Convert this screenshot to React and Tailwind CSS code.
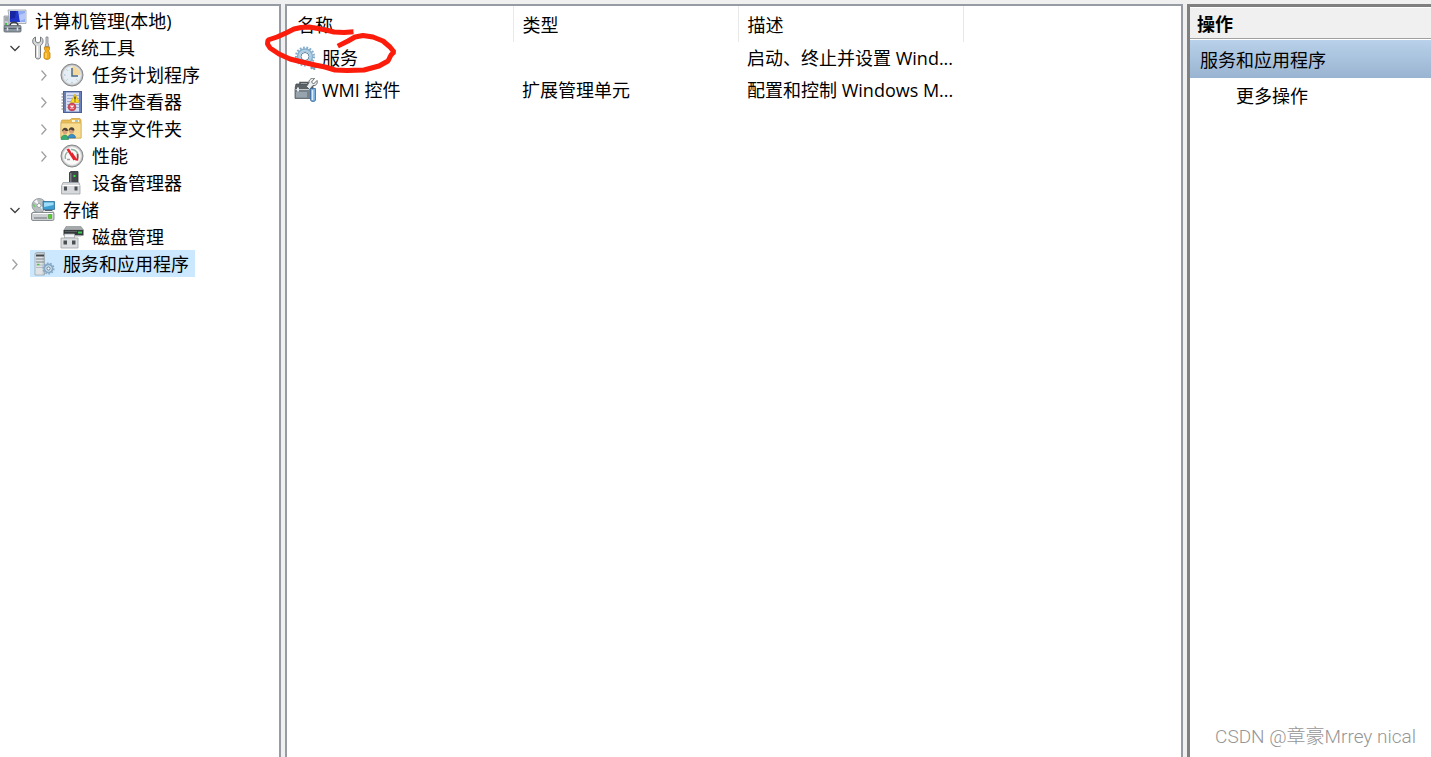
import React, { useState } from 'react';

function Svg({ children }) {
  return (
    <svg viewBox="0 0 24 24" className="w-6 h-6 shrink-0" fill="none" aria-hidden="true">
      {children}
    </svg>
  );
}

function ComputerIcon() {
  return (
    <Svg>
      <path d="M1 7h5v10H1z" fill="#c3c9ce" stroke="#8d959c" strokeWidth="0.8" />
      <path d="M2 9h3M2 11h3" stroke="#7f878e" />
      <path d="M2 14h2v2H2z" fill="#45c14b" />
      <path d="M5 1h18v13.500H7z" fill="#e3e6ea" stroke="#9aa1a8" strokeWidth="0.8" />
      <path d="M7 2h15v11H7z" fill="#2036c8" />
      <path d="M15 2h7v11h-5z" fill="#8fa9f2" />
      <path d="M16 6l6-2v6l-5 2z" fill="#b4c6fa" />
      <path d="M7 2h6l-1 7-5 1z" fill="#1626a0" />
      <path d="M7 17c0-5 8-5 8 0" stroke="#3c4248" strokeWidth="1.500" />
      <rect x="1" y="16.500" width="17" height="6.500" rx="1" fill="#8a959e" stroke="#5c666f" strokeWidth="0.8" />
      <path d="M1 19.500h17" stroke="#56606a" />
      <path d="M4.500 18.500v3M14.500 18.500v3" stroke="#dfe4e8" strokeWidth="1.500" />
    </Svg>
  );
}

function ToolsIcon() {
  return (
    <Svg>
      <path
        d="M4.500 1C2 2 1.200 4.500 2 7c.4 1.200 1.500 2 2.500 2.500V21c0 2.600 5 2.600 5 0V9.500c1.700-.8 2.800-2.800 2.500-5C11.800 3 11 1.700 9.500 1v4.500L7 7 4.500 5.500z"
        fill="#d6d8da"
        stroke="#74797d"
      />
      <path d="M6.500 10v11" stroke="#fff" strokeWidth="1.200" />
      <path d="M15 1h2v6l1 3.500h-4l1-3.500z" fill="#c8ccd0" stroke="#7d8286" strokeWidth="0.8" />
      <path d="M13.500 11h5v2.500l-1 1.500 1.500 2v4.500c0 2.500-6 2.500-6 0V17l1.500-2-1-1.500z" fill="#f4ad18" stroke="#c07f0c" strokeWidth="0.8" />
      <path d="M15 17v5" stroke="#ffe08a" strokeWidth="1.200" />
    </Svg>
  );
}

function ClockIcon() {
  return (
    <Svg>
      <circle cx="12" cy="12" r="11" fill="#b5b6b7" stroke="#858789" />
      <circle cx="12" cy="12" r="9.300" fill="#e5eef5" stroke="#d9dbdc" />
      <path d="M12 12V3.500A8.500 8.500 0 0 1 20.500 12z" fill="#f5d99c" />
      <path d="M12 5v8h6" stroke="#4b6a86" strokeWidth="1.500" />
      <path d="M12 19v1.500M4 12h1.500M6.500 6.500l1 1M6.500 17.500l1-1M17.500 17.500l-1-1" stroke="#a3b3c0" />
    </Svg>
  );
}

function EventIcon() {
  return (
    <Svg>
      <rect x="3.500" y="1.500" width="18" height="21" fill="#6981bd" stroke="#4c5f92" />
      <path d="M6 2.500h13v19H6z" fill="#d5def2" />
      <path d="M7 5.500h12M7 8.500h12M7 11.500h12M7 14.500h12M7 17.500h12" stroke="#9aabd6" />
      <path d="M1.500 4h4M1.500 7h4M1.500 10h4M1.500 13h4M1.500 16h4M1.500 19h4" stroke="#6c7484" strokeWidth="1.200" />
      <path d="M15 4l4.500 8.500h-9z" fill="#ffdc27" stroke="#d8b01c" strokeWidth="0.8" />
      <path d="M15 6.500v3M15 10.500v1" stroke="#332b00" strokeWidth="1.200" />
      <circle cx="12" cy="17" r="3.800" fill="#d94c5c" stroke="#b53545" strokeWidth="0.8" />
      <path d="M10.500 15.500l3 3M13.500 15.500l-3 3" stroke="#fff" strokeWidth="1.200" />
    </Svg>
  );
}

function SharedFolderIcon() {
  return (
    <Svg>
      <path d="M1 5l1-2h8l1.500-1.500H20L21 3v18H1z" fill="#e8bd56" stroke="#cfa546" strokeWidth="0.8" />
      <path d="M12 3h7v2h-7z" fill="#fff6d2" />
      <path d="M15 4h3" stroke="#4b9ad4" />
      <path d="M1 6h20v15H1z" fill="#f7dc92" stroke="#d7b25a" strokeWidth="0.8" />
      <path d="M1 22.500c0-6 7.500-6 7.500 0z" fill="#37ae6f" stroke="#208350" strokeWidth="0.6" />
      <path d="M8 21c0-5 7.500-5 7.500 0z" fill="#3b8fc9" stroke="#22679a" strokeWidth="0.6" />
      <circle cx="5" cy="14.500" r="2.600" fill="#d8a27c" />
      <path d="M2 14.500c0-5 6-5 6-.5-2 .3-3-.6-3.800-1z" fill="#4b4034" />
      <circle cx="11.500" cy="14" r="2.600" fill="#d8a27c" />
      <path d="M8.500 14c0-5 6-5 6-.5-2 .3-3-.6-3.800-1z" fill="#4b4034" />
    </Svg>
  );
}

function PerformanceIcon() {
  return (
    <Svg>
      <circle cx="12" cy="12" r="11" fill="#b9babb" stroke="#858688" />
      <circle cx="12" cy="12" r="9.300" fill="#fafafa" stroke="#dedede" />
      <path d="M5.500 15a7 7 0 0 1 2-7M11 5.500c4-.5 8 3 7 9" stroke="#8fb3a0" strokeWidth="1.500" />
      <path d="M6.500 5.500L9 4.500l6.500 11-2 1z" fill="#e3222a" />
      <path d="M12 8l6 8.500h-2.500L12 11z" fill="#e3222a" />
      <path d="M17.500 10v6.500" stroke="#e3222a" strokeWidth="1.500" />
      <path d="M7 15.500h3" stroke="#9da1a4" strokeWidth="1.500" />
    </Svg>
  );
}

function DeviceIcon() {
  return (
    <Svg>
      <path d="M9.500 1.500L11 .500h7v12H9.500z" fill="#42484c" stroke="#292d30" strokeWidth="0.8" />
      <path d="M10 2h1.500v10H10z" fill="#787f84" />
      <path d="M13.500 4h2v2h-2z" fill="#35df45" />
      <path d="M3 11.500h16l1 3.500v8H1.500v-8z" fill="#d6d8db" stroke="#9da1a5" strokeWidth="0.8" />
      <path d="M2.500 14.500h17" stroke="#fff" />
      <path d="M4 15.500h3v4H4zM14.500 15.500h3v4h-3z" fill="#4c5156" />
    </Svg>
  );
}

function StorageIcon() {
  return (
    <Svg>
      <path d="M2 15l2-3h17l2 3z" fill="#eceeef" stroke="#969b9f" strokeWidth="0.7" />
      <rect x="0.500" y="14.500" width="22.500" height="8" rx="1.500" fill="#cdd0d2" stroke="#74797d" strokeWidth="0.8" />
      <path d="M2 15.500h20" stroke="#fff" />
      <path d="M3 20h13" stroke="#8b9195" strokeWidth="1.500" />
      <path d="M17.500 16.500h3v4h-3z" fill="#55d32c" stroke="#398e20" strokeWidth="0.5" />
      <circle cx="8" cy="7.500" r="7" fill="#b9bec1" stroke="#8c9296" strokeWidth="0.8" />
      <path d="M8 7.500L3 3.500l3-2zM8 7.500l6 2-2 3z" fill="#f4f6f7" />
      <circle cx="8" cy="7.500" r="2" fill="#fff" stroke="#8c9296" strokeWidth="0.8" />
      <path d="M2 6l2 3" stroke="#6fca6a" strokeWidth="1.500" />
      <path d="M12 3.500h11.500v8H12z" fill="#3f9fd3" stroke="#2c6f99" strokeWidth="0.8" />
      <path d="M13 4.500h9.500v2.500L13 9z" fill="#9fdcf7" />
      <path d="M14 12.500h7" stroke="#5c6468" />
    </Svg>
  );
}

function DiskIcon() {
  return (
    <Svg>
      <path d="M4 5l2-3.500h15L23.500 5z" fill="#a5a9ac" stroke="#85898c" strokeWidth="0.6" />
      <path d="M3.500 5h20v5.500h-20z" fill="#34393c" />
      <path d="M5 6.500h12" stroke="#596064" />
      <path d="M18 6.500h4v2h-4z" fill="#38cf4e" />
      <path d="M6 11h15" stroke="#b5b9bb" />
      <path d="M4.500 9h10v4h-10z" fill="#f3f4f5" stroke="#a2a6a9" strokeWidth="0.8" />
      <path d="M1 13h17v10H1z" fill="#dcdee0" stroke="#a0a4a7" strokeWidth="0.8" />
      <path d="M3.500 15.500h3.500v4H3.500zM12 15.500h3.500v4H12z" fill="#4a4f52" />
    </Svg>
  );
}

function Gear({ cx, cy, r, color, width }) {
  return (
    <g stroke={color}>
      <circle cx={cx} cy={cy} r={r} strokeWidth={width} />
      <circle cx={cx} cy={cy} r={r + width * 0.7} strokeWidth={width * 0.7} strokeDasharray="1.800 1.500" />
    </g>
  );
}

function ServerGearIcon() {
  return (
    <Svg>
      <path d="M4 1.500L6 .500h7.500V23H4z" fill="#c5cbcf" stroke="#98a1a8" strokeWidth="0.8" />
      <path d="M4.500 2h7v20.500h-7z" fill="#dfe3e5" />
      <path d="M5 3.500h8" stroke="#42494e" strokeWidth="2" />
      <path d="M5 7h8M5 10h8" stroke="#7a8388" strokeWidth="1.200" />
      <path d="M5 13h8M5 15.500h7" stroke="#b4bbbf" />
      <path d="M6 12.500h2.500" stroke="#4ec451" strokeWidth="1.500" />
      <Gear cx="17.500" cy="16.500" r={4} width={2} color="#86a9c6" />
      <circle cx="17.500" cy="16.500" r="3" fill="#c9dcea" />
      <circle cx="17.500" cy="16.500" r="1.600" fill="#eff7fc" stroke="#54758f" strokeWidth="0.8" />
    </Svg>
  );
}

function GearsIcon() {
  return (
    <Svg>
      <Gear cx="11" cy="10.500" r={6.5} width={3.4} color="#86aecb" />
      <circle cx="11" cy="10.500" r="6" stroke="#b4d3e8" strokeWidth="1.500" />
      <circle cx="11" cy="10.500" r="4" fill="#fff" stroke="#55809f" strokeWidth="1" />
      <Gear cx="19.500" cy="20" r={2} width={1.8} color="#7899b2" />
      <circle cx="19.500" cy="20" r="1.200" fill="#fff" />
    </Svg>
  );
}

function ToolboxIcon() {
  return (
    <Svg>
      <path d="M6 7V4.500h8V7" stroke="#50575d" strokeWidth="1.500" />
      <path d="M2 6h17v4.500H1z" fill="#5b6369" stroke="#454c52" strokeWidth="0.8" />
      <path d="M1 11h18v9.500H1z" fill="#77828b" stroke="#565f66" strokeWidth="0.8" />
      <path d="M1.500 11.500h17" stroke="#c3cad0" />
      <path d="M4 9.500v4" stroke="#e6eaed" strokeWidth="2" />
      <path d="M2 14h11v5.500H2z" fill="#98a4ad" />
      <path d="M23 2.500L19.500 6l-2-2L20.500.500c-3-1-6 1.500-5.500 4l-2.500 4 3 3L19 7.500c3 .5 5-2 4-5z" fill="#eceeef" stroke="#555b60" strokeWidth="0.9" />
      <path d="M16.500 10.500h5V22c0 2-5 2-5 0z" fill="#79afe0" stroke="#386899" strokeWidth="0.8" />
      <path d="M18.500 12v10" stroke="#d8edff" strokeWidth="1.500" />
    </Svg>
  );
}

const tree = [
  {
    label: '系统工具',
    icon: ToolsIcon,
    open: true,
    children: [
      { label: '任务计划程序', icon: ClockIcon, expandable: true },
      { label: '事件查看器', icon: EventIcon, expandable: true },
      { label: '共享文件夹', icon: SharedFolderIcon, expandable: true },
      { label: '性能', icon: PerformanceIcon, expandable: true },
      { label: '设备管理器', icon: DeviceIcon }
    ]
  },
  {
    label: '存储',
    icon: StorageIcon,
    open: true,
    children: [{ label: '磁盘管理', icon: DiskIcon }]
  },
  { label: '服务和应用程序', icon: ServerGearIcon, expandable: true }
];

const rows = [
  { name: '服务', icon: GearsIcon, type: '', desc: '启动、终止并设置 Wind...' },
  { name: 'WMI 控件', icon: ToolboxIcon, type: '扩展管理单元', desc: '配置和控制 Windows M...' }
];

function TreeItem({ node, selected, onSelect }) {
  const [open, setOpen] = useState(!!node.open);
  const NodeIcon = node.icon;
  const canExpand = node.expandable || node.children;

  return (
    <li>
      <div className="flex h-[27px]">
        <div className="w-[27px] shrink-0 flex items-center">
          {canExpand && (
            <button aria-label={node.label} aria-expanded={open} onClick={() => setOpen(!open)} className="w-6 h-6 flex items-center justify-center">
              <svg viewBox="0 0 12 12" className="w-3 h-3" fill="none" aria-hidden="true">
                {open ? (
                  <path d="M1.500 4l4.500 4.500L10.500 4" stroke="#404040" strokeWidth="1.300" />
                ) : (
                  <path d="M3.500 1.500L8 6.500l-4.500 5" stroke="#a0a0a0" strokeWidth="1.300" />
                )}
              </svg>
            </button>
          )}
        </div>
        <button
          onClick={() => onSelect(node.label)}
          className={`flex items-center gap-2 pl-px pr-1.5 whitespace-nowrap ${selected === node.label ? 'bg-[#cce8ff]' : ''}`}
        >
          <NodeIcon />
          <span className="pt-0.5">{node.label}</span>
        </button>
      </div>
      {open && node.children && (
        <ul className="pl-[29px]">
          {node.children.map((child) => (
            <TreeItem key={child.label} node={child} selected={selected} onSelect={onSelect} />
          ))}
        </ul>
      )}
    </li>
  );
}

export default function App() {
  const [selected, setSelected] = useState('服务和应用程序');

  return (
    <div className="relative flex gap-1 min-h-screen pt-1 bg-[#f0f0f0] text-black text-[18px] leading-[27px] font-['Open_Sans','Noto_Sans_CJK_SC',sans-serif]">
      {/* Console tree */}
      <nav className="w-[281px] shrink-0 bg-white border-t-2 border-r-2 border-[#979ba3] pl-[3px] pt-px">
        <button className="flex items-center gap-2 h-[27px] whitespace-nowrap">
          <ComputerIcon />
          <span className="pt-0.5">计算机管理(本地)</span>
        </button>
        <ul>
          {tree.map((node) => (
            <TreeItem key={node.label} node={node} selected={selected} onSelect={setSelected} />
          ))}
        </ul>
      </nav>

      {/* Details list */}
      <main className="flex-1 min-w-0 bg-white border-2 border-b-0 border-[#979ba3]">
        <table className="w-full table-fixed text-left">
          <colgroup>
            <col className="w-[226px]" />
            <col className="w-[225px]" />
            <col className="w-[225px]" />
            <col />
          </colgroup>
          <thead>
            <tr className="h-9">
              <th className="font-normal p-0 pl-2.5 pt-0.5 border-r border-[#e8e8e8]">名称</th>
              <th className="font-normal p-0 pl-[9px] pt-0.5 border-r border-[#e8e8e8]">类型</th>
              <th className="font-normal p-0 pl-[9px] pt-0.5 border-r border-[#e8e8e8]">描述</th>
              <td />
            </tr>
          </thead>
          <tbody>
            {rows.map((row) => (
              <tr key={row.name} className="h-8">
                <td className="p-0 pl-[7px]">
                  <div className="flex items-center gap-1">
                    <row.icon />
                    {row.name}
                  </div>
                </td>
                <td className="p-0 pl-[9px]">{row.type}</td>
                <td className="p-0 pl-[9px] whitespace-nowrap">{row.desc}</td>
                <td />
              </tr>
            ))}
          </tbody>
        </table>
      </main>

      {/* Actions */}
      <aside className="w-[244px] shrink-0 bg-white border-t-3 border-l-3 border-[#808080]">
        <h2 className="h-[31px] mt-px pt-0.5 pl-[7px] flex items-center font-bold bg-[#f0f0f0] border-b border-[#a0a0a0]">操作</h2>
        <div className="h-[38px] mt-px pt-0.5 pl-2.5 flex items-center bg-linear-to-b from-[#b9d1ea] to-[#99b4d1]">服务和应用程序</div>
        <button className="h-9 pl-[46px] flex items-center">更多操作</button>
      </aside>

      {/* Hand-drawn marker around the services entry */}
      <svg viewBox="0 0 140 60" className="absolute left-[260px] top-5 w-[140px] h-[60px] pointer-events-none" fill="none" aria-hidden="true">
        <path
          d="M91 12L84 12.500 74 12 66 10 58 8.500 49 7 41 7.500 34 9 26 13 17 17 8 20 7.500 24 10 28 19 34 30 39 42 42 55 45 65 47 75 50 87 50.500 104 50 119 46 128 41 131 35 134 32 130 27 123 21 113 17 103 15.500 95 17 88 21 80 25"
          stroke="#fc1c0c"
          strokeWidth="5"
          strokeLinejoin="bevel"
          strokeLinecap="square"
        />
      </svg>

      <p className="absolute right-[15px] bottom-1.5 text-[19px] leading-7 font-light text-[#969696] font-['Roboto','Noto_Sans_CJK_SC',sans-serif]">CSDN @章豪Mrrey nical</p>
    </div>
  );
}
